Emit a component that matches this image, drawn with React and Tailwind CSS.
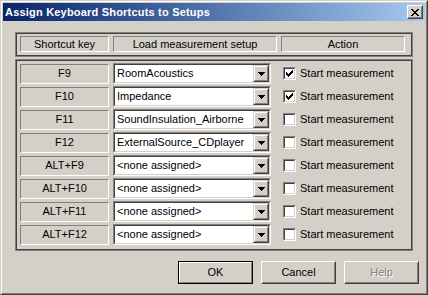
import React from "react";

const rows = [
  { key: "F9", setup: "RoomAcoustics", checked: true },
  { key: "F10", setup: "Impedance", checked: true },
  { key: "F11", setup: "SoundInsulation_Airborne", checked: false },
  { key: "F12", setup: "ExternalSource_CDplayer", checked: false },
  { key: "ALT+F9", setup: "<none assigned>", checked: false },
  { key: "ALT+F10", setup: "<none assigned>", checked: false },
  { key: "ALT+F11", setup: "<none assigned>", checked: false },
  { key: "ALT+F12", setup: "<none assigned>", checked: false },
];

function Sunken({ className = "", innerClass = "", children }) {
  return (
    <div className={"border border-t-[#808080] border-l-[#808080] border-b-white border-r-white " + className}>
      <div className={"h-full border border-t-[#404040] border-l-[#404040] border-b-[#d4d0c8] border-r-[#d4d0c8] " + innerClass}>
        {children}
      </div>
    </div>
  );
}

function Combo({ text }) {
  return (
    <Sunken className="w-[158px] h-[21px]" innerClass="bg-white flex">
      <div className="flex-1 pl-[2px] leading-[15px] pt-px whitespace-nowrap overflow-hidden">{text}</div>
      <div className="w-[16px] h-full border border-t-[#d4d0c8] border-l-[#d4d0c8] border-b-[#404040] border-r-[#404040]">
        <div className="h-full bg-[#d4d0c8] border border-t-white border-l-white border-b-[#808080] border-r-[#808080] flex items-center justify-center">
          <svg width="7" height="4" viewBox="0 0 7 4" className="mt-px">
            <path d="M0 0h7v1h-1v1h-1v1h-1v1h-1v-1h-1v-1h-1v-1h-1z" fill="#000" />
          </svg>
        </div>
      </div>
    </Sunken>
  );
}

function Check({ checked }) {
  return (
    <Sunken className="w-[13px] h-[13px]" innerClass="bg-white flex items-center justify-center">
      {checked && (
        <svg width="7" height="7" viewBox="0 0 7 7">
          <path d="M0 2h1v1h1v1h1v-1h1v-1h1v-1h1v-1h1v3h-1v1h-1v1h-1v1h-1v1h-1v-1h-1v-1h-1v-1h-1z" fill="#000" />
        </svg>
      )}
    </Sunken>
  );
}

function Button({ label, isDefault, disabled }) {
  if (isDefault) {
    return (
      <div className="w-[75px] h-[23px] border border-black">
        <div className="h-full border border-t-white border-l-white border-b-[#808080] border-r-[#808080] flex items-center justify-center">
          <span>{label}</span>
        </div>
      </div>
    );
  }
  return (
    <div className="w-[75px] h-[23px]">
      <div className="h-full border border-t-white border-l-white border-b-[#404040] border-r-[#404040]">
        <div className="h-full border border-t-[#d4d0c8] border-l-[#d4d0c8] border-b-[#808080] border-r-[#808080] flex items-center justify-center">
          {disabled ? (
            <span className="text-[#808080] [text-shadow:1px_1px_0_#fff]">{label}</span>
          ) : (
            <span>{label}</span>
          )}
        </div>
      </div>
    </div>
  );
}

function Etched({ className = "", children }) {
  return (
    <div className={"border border-t-[#808080] border-l-[#808080] border-b-white border-r-white flex items-center justify-center " + className}>
      {children}
    </div>
  );
}

export default function App() {
  return (
    <div className="w-[428px] h-[295px] bg-[#d4d0c8] border border-t-[#d4d0c8] border-l-[#d4d0c8] border-r-[#404040] border-b-[#404040] font-['Liberation_Sans',Arial,sans-serif] text-[11px] text-black">
      <div className="h-full border border-t-white border-l-white border-r-[#808080] border-b-[#808080] p-px flex flex-col">
        <div className="h-[18px] bg-gradient-to-r from-[#0a246a] to-[#a6caf0] flex items-center pl-[2px] pr-[2px]">
          <span className="flex-1 text-white font-bold text-[11px] tracking-[0.2px] leading-none">Assign Keyboard Shortcuts to Setups</span>
          <div className="w-[16px] h-[14px] border border-t-white border-l-white border-b-[#404040] border-r-[#404040]">
            <div className="h-full bg-[#d4d0c8] border border-t-[#d4d0c8] border-l-[#d4d0c8] border-b-[#808080] border-r-[#808080] flex items-center justify-center">
              <svg width="8" height="7" viewBox="0 0 8 7">
                <path d="M0 0h2v1h1v1h2v-1h1v-1h2v1h-1v1h-1v1h-1v1h1v1h1v1h1v1h-2v-1h-1v-1h-2v1h-1v1h-2v-1h1v-1h1v-1h1v-1h-1v-1h-1v-1h-1z" fill="#000" />
              </svg>
            </div>
          </div>
        </div>

        <div className="ml-[12px] mt-[11px] w-[398px] h-[25px] border border-[#808080]">
          <div className="h-full border border-[#404040] flex gap-[4px] pl-[3px] pt-[2px]">
            <Etched className="w-[89px] h-[16px]">Shortcut key</Etched>
            <Etched className="w-[164px] h-[16px]">Load measurement setup</Etched>
            <Etched className="w-[124px] h-[16px]">Action</Etched>
          </div>
        </div>

        <div className="ml-[12px] mt-[2px] w-[398px] h-[192px] border border-[#808080]">
          <div className="h-full border border-[#404040] flex flex-col gap-[2px] pl-[3px] pt-[2px]">
            {rows.map((r) => (
              <div key={r.key} className="flex items-center h-[21px]">
                <Etched className="w-[89px] h-[20px]">{r.key}</Etched>
                <div className="ml-[4px]">
                  <Combo text={r.setup} />
                </div>
                <div className="ml-[12px]">
                  <Check checked={r.checked} />
                </div>
                <span className="ml-[4px] whitespace-nowrap">Start measurement</span>
              </div>
            ))}
          </div>
        </div>

        <div className="mt-[10px] flex justify-end gap-[8px] pr-[6px]">
          <Button label="OK" isDefault />
          <Button label="Cancel" />
          <Button label="Help" disabled />
        </div>
      </div>
    </div>
  );
}
